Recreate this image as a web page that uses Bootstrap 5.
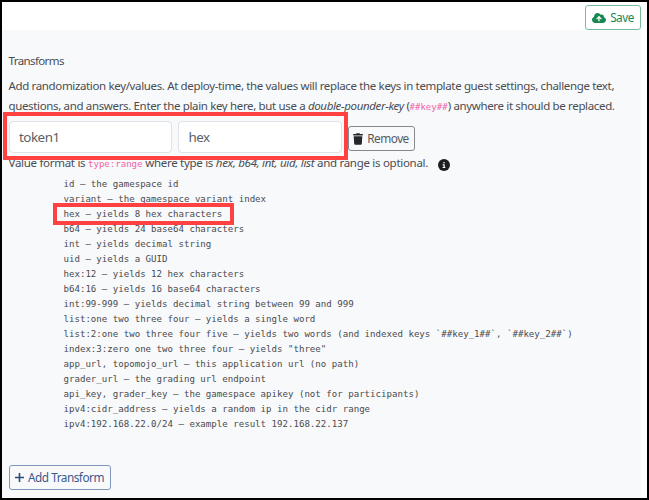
<!DOCTYPE html>
<html lang="en">
<head>
<meta charset="utf-8">
<title>Transforms</title>
<link rel="stylesheet" href="https://cdn.jsdelivr.net/npm/bootstrap@5.3.0/dist/css/bootstrap.min.css">
<style>
body{font-family:"Noto Sans","Open Sans",sans-serif;font-size:11.5px;letter-spacing:-.35px;line-height:19.6px;color:#4a4d51;background:#fff}
.frame{height:500px;border:2px solid #000;overflow:hidden}
.topbar{height:28px;padding:3px 6px 0 0}
.panel{height:468px;margin-right:6px;background:#f8f9fb;padding:20.5px 0 0 6.5px}
.btn{--bs-btn-padding-x:4px;--bs-btn-padding-y:0;--bs-btn-border-radius:3px;--bs-btn-font-size:11.8px;--bs-btn-line-height:23px;height:25px;gap:4px;white-space:nowrap;letter-spacing:-.5px}
.btn svg,.info{flex:none}
.btn-save{--bs-btn-color:#198754;--bs-btn-border-color:#79bd9d;--bs-btn-bg:#fff;width:56px}
.btn-remove{--bs-btn-color:#55595d;--bs-btn-border-color:#85888c;width:67px;margin-top:5.5px}
.btn-add{--bs-btn-color:#3b5a8c;--bs-btn-border-color:#8097bd;width:102px}
.ln{white-space:nowrap;height:19.6px}
.heading-line{margin-bottom:6px;letter-spacing:-.6px}
.s1{letter-spacing:-.355px}
.s3{letter-spacing:-.29px}
code{font-family:"DejaVu Sans Mono",monospace;font-size:9.05px;letter-spacing:0;color:#f062a8}
.fields{height:33px;margin:5.5px 0 0}
.form-control{width:163.5px;height:32px;padding:0 9.5px;font-size:13.4px;letter-spacing:-.5px;color:#5b6066;border-color:#dfe2e6;border-radius:4px;margin-right:6px}
.fields .form-control{flex:none}
.info{margin-left:10px;margin-top:2px}
.formats{font-family:"DejaVu Sans Mono",monospace;font-size:9.1px;letter-spacing:0;line-height:14.97px;color:#484b4f;margin:4px 0 33.5px 55px;overflow:visible}
.hl{position:absolute;border:4px solid #ff4141}
.hl-fields{left:3px;top:112px;width:345px;height:48px}
.hl-hex{left:53px;top:203px;width:181px;height:22px}
</style>
<script src="https://cdn.jsdelivr.net/npm/bootstrap@5.3.0/dist/js/bootstrap.bundle.min.js"></script>
</head>
<body>
<main class="frame">
  <div class="topbar d-flex justify-content-end">
    <button class="btn btn-save d-inline-flex align-items-center justify-content-center" type="button"><svg width="14" height="12" viewBox="0 0 640 512" fill="currentColor"><path fill-rule="evenodd" d="M144 480C64.500 480 0 415.500 0 336c0-62.800 40.200-116.200 96.200-135.900-.1-2.700-.2-5.400-.2-8.100 0-88.400 71.600-160 160-160 59.300 0 111 32.200 138.700 80.200C409.900 102 428.300 96 448 96c53 0 96 43 96 96 0 12.200-2.300 23.800-6.400 34.600C596 238.400 640 290.100 640 352c0 70.700-57.300 128-128 128H144zM190 285l36 36 62-61V400h60V260l62 61 36-36L318 158z"/></svg><span>Save</span></button>
  </div>
  <section class="panel">
    <div class="ln heading-line">Transforms</div>
    <div class="ln s1">Add randomization key/values. At deploy-time, the values will replace the keys in template guest settings, challenge text,</div>
    <div class="ln s2">questions, and answers. Enter the plain key here, but use a <em>double-pounder-key</em> (<code>##key##</code>) anywhere it should be replaced.</div>
    <div class="fields d-flex align-items-start">
      <input class="form-control" type="text" value="token1" aria-label="Key">
      <input class="form-control" type="text" value="hex" aria-label="Value">
      <button class="btn btn-remove d-inline-flex align-items-center justify-content-center flex-shrink-0" type="button"><svg width="10" height="12" viewBox="0 0 448 512" fill="#24282c"><path d="M135 18 128 32H32a32 32 0 0 0 0 64h384a32 32 0 0 0 0-64h-96l-7-14A32 32 0 0 0 284 0H164a32 32 0 0 0-29 18zM416 128H32l21 339a48 48 0 0 0 48 45h246a48 48 0 0 0 48-45z"/></svg><span>Remove</span></button>
    </div>
    <div class="ln s3 d-flex align-items-center"><span>Value format is <code>type:range</code> where type is <em>hex, b64, int, uid, list</em> and range is optional.</span><svg class="info" width="12" height="12" viewBox="0 0 512 512"><circle cx="256" cy="256" r="256" fill="#1b1e21"/><path d="M216 336h24v-64h-24a24 24 0 0 1 0-48h48a24 24 0 0 1 24 24v88h8a24 24 0 0 1 0 48h-80a24 24 0 0 1 0-48zM256 128a34 34 0 1 1 0 68 34 34 0 0 1 0-68z" fill="#fff"/></svg></div>
<pre class="formats">id – the gamespace id
variant – the gamespace variant index
hex – yields 8 hex characters
b64 – yields 24 base64 characters
int – yields decimal string
uid – yields a GUID
hex:12 – yields 12 hex characters
b64:16 – yields 16 base64 characters
int:99-999 – yields decimal string between 99 and 999
list:one two three four – yields a single word
list:2:one two three four five – yields two words (and indexed keys `##key_1##`, `##key_2##`)
index:3:zero one two three four – yields "three"
app_url, topomojo_url – this application url (no path)
grader_url – the grading url endpoint
api_key, grader_key – the gamespace apikey (not for participants)
ipv4:cidr_address – yields a random ip in the cidr range
ipv4:192.168.22.0/24 – example result 192.168.22.137</pre>
    <button class="btn btn-add d-inline-flex align-items-center justify-content-center" type="button"><svg width="9" height="9" viewBox="0 0 9 9" stroke="#2d4a7c" stroke-width="1.6"><path d="M4.500 0v9M0 4.500h9"/></svg><span>Add Transform</span></button>
  </section>
</main>
<div class="hl hl-fields"></div>
<div class="hl hl-hex"></div>
</body>
</html>
